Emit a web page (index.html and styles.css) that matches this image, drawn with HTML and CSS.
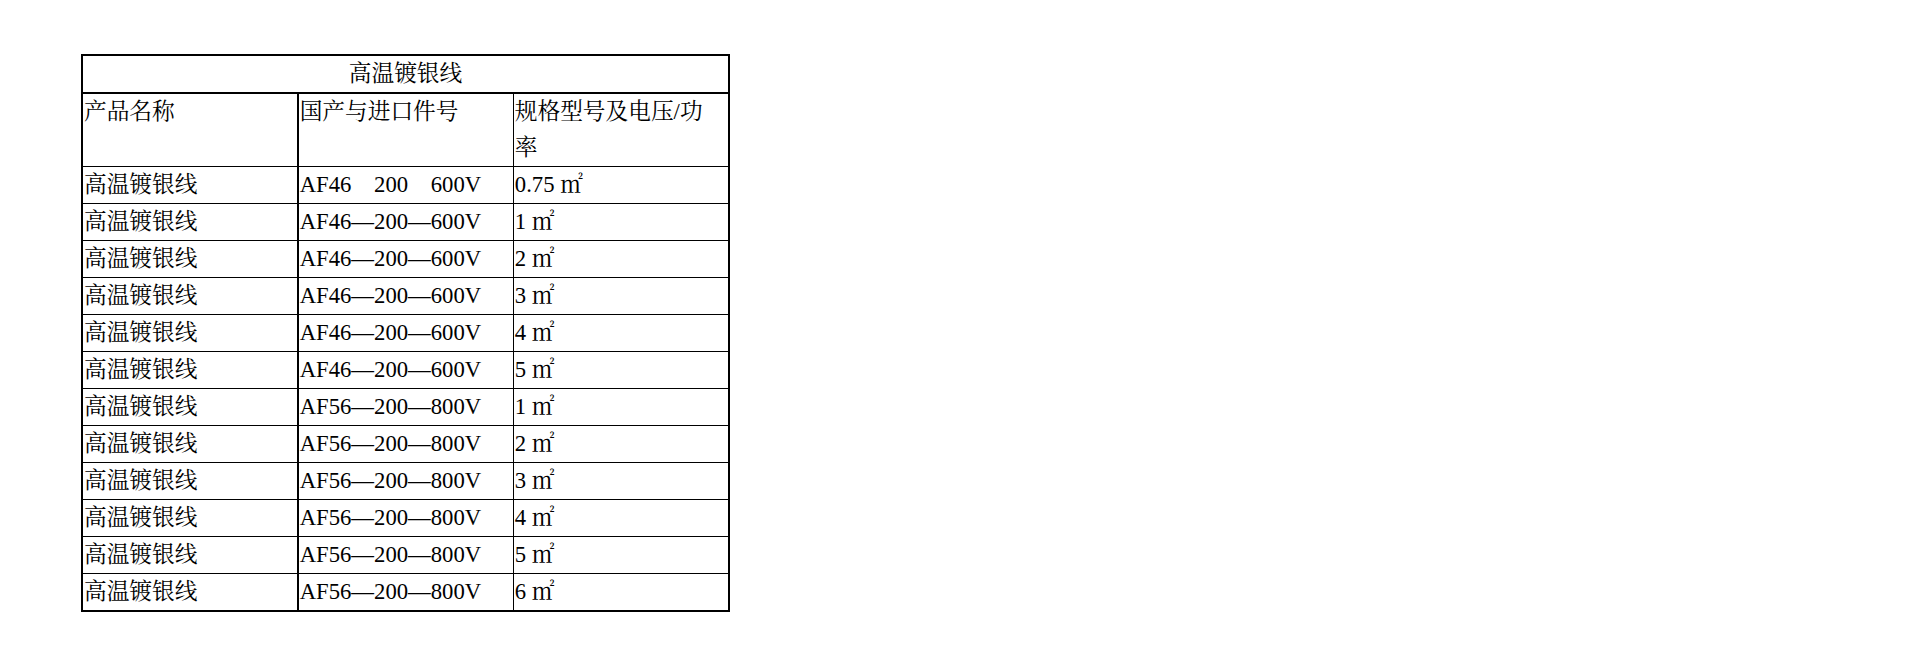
FILE: index.html
```html
<!DOCTYPE html>
<html lang="zh-CN">
<head>
<meta charset="utf-8">
<title>高温镀银线</title>
<link rel="stylesheet" href="styles.css">
</head>
<body>
<div class="page">
  <table class="spec">
    <tbody>
      <tr><td class="title" colspan="3">高温镀银线</td></tr>
      <tr class="head">
        <td class="c1">产品名称</td>
        <td class="c2">国产与进口件号</td>
        <td class="c3">规格型号及电压/功<br>率</td>
      </tr>
      <tr><td class="c1">高温镀银线</td><td class="c2">AF46　200　600V</td><td class="c3">0.75 ㎡</td></tr>
      <tr><td class="c1">高温镀银线</td><td class="c2">AF46—200—600V</td><td class="c3">1 ㎡</td></tr>
      <tr><td class="c1">高温镀银线</td><td class="c2">AF46—200—600V</td><td class="c3">2 ㎡</td></tr>
      <tr><td class="c1">高温镀银线</td><td class="c2">AF46—200—600V</td><td class="c3">3 ㎡</td></tr>
      <tr><td class="c1">高温镀银线</td><td class="c2">AF46—200—600V</td><td class="c3">4 ㎡</td></tr>
      <tr><td class="c1">高温镀银线</td><td class="c2">AF46—200—600V</td><td class="c3">5 ㎡</td></tr>
      <tr><td class="c1">高温镀银线</td><td class="c2">AF56—200—800V</td><td class="c3">1 ㎡</td></tr>
      <tr><td class="c1">高温镀银线</td><td class="c2">AF56—200—800V</td><td class="c3">2 ㎡</td></tr>
      <tr><td class="c1">高温镀银线</td><td class="c2">AF56—200—800V</td><td class="c3">3 ㎡</td></tr>
      <tr><td class="c1">高温镀银线</td><td class="c2">AF56—200—800V</td><td class="c3">4 ㎡</td></tr>
      <tr><td class="c1">高温镀银线</td><td class="c2">AF56—200—800V</td><td class="c3">5 ㎡</td></tr>
      <tr><td class="c1">高温镀银线</td><td class="c2">AF56—200—800V</td><td class="c3">6 ㎡</td></tr>
    </tbody>
  </table>
</div>
</body>
</html>
```
FILE: styles.css
```css
html, body {
  margin: 0;
  padding: 0;
  background: #ffffff;
}

.page {
  padding: 54px 0 0 81px;
}

.spec {
  border-collapse: collapse;
  width: 649px;
  table-layout: fixed;
  border: 2px solid #000;
  font-family: "Liberation Serif", "Noto Serif CJK SC", "Noto Sans CJK SC", serif;
  font-size: 22.7px;
  line-height: 36px;
  color: #000;
}

.spec td {
  border: 1px solid #000;
  padding: 0 1px;
  vertical-align: top;
  text-align: left;
  white-space: nowrap;
  font-weight: normal;
}

.spec .title {
  text-align: center;
  border-bottom-width: 2px;
}

.spec .c1 {
  width: 213px;
  border-right-width: 2px;
}

.spec .c2 {
  width: 214px;
}
```
